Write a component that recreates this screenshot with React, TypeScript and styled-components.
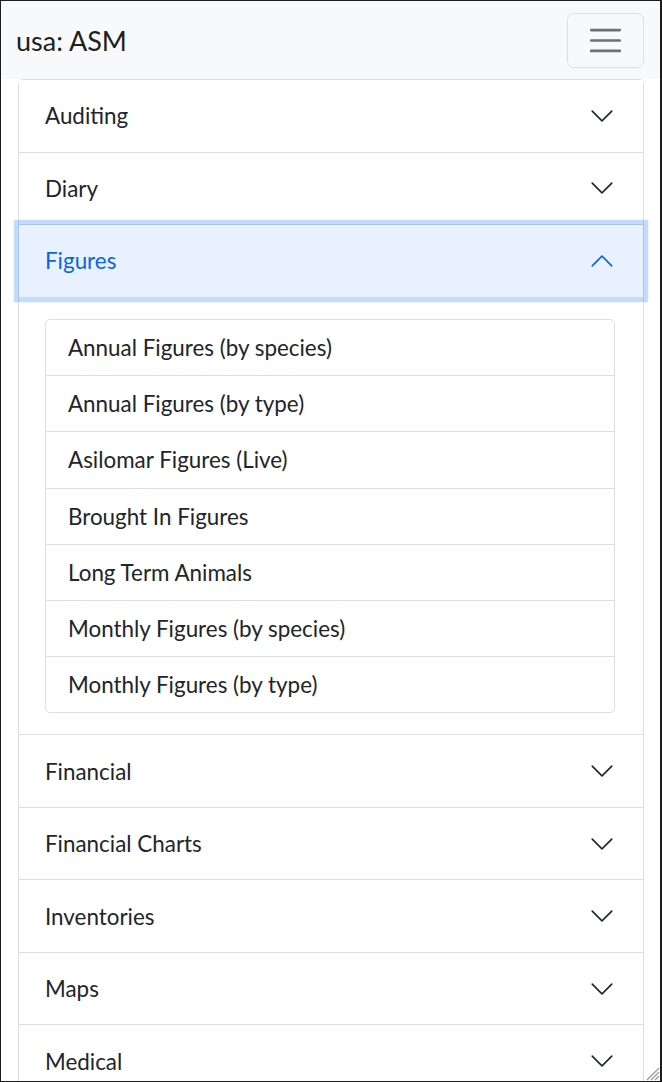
import React from "react"
import styled, { createGlobalStyle, css } from "styled-components"

const GlobalStyle = createGlobalStyle`
  html, body {
    margin: 0;
    padding: 0;
    background: #ffffff;
  }
  body {
    font-family: "Lato", "Open Sans", sans-serif;
    color: #212529;
  }
  * { box-sizing: border-box; }
`

const sections = [
  "Auditing",
  "Diary",
  "Figures",
  "Financial",
  "Financial Charts",
  "Inventories",
  "Maps",
  "Medical",
]

const figureReports = [
  "Annual Figures (by species)",
  "Annual Figures (by type)",
  "Asilomar Figures (Live)",
  "Brought In Figures",
  "Long Term Animals",
  "Monthly Figures (by species)",
  "Monthly Figures (by type)",
]

const Chevron = ({ open }: { open?: boolean }) => (
  <ChevronSvg viewBox="0 0 16 16" $open={open}>
    <path
      fillRule="evenodd"
      d="M1.646 4.646a.5.5 0 0 1 .708 0L8 10.293l5.646-5.647a.5.5 0 0 1 .708.708l-6 6a.5.5 0 0 1-.708 0l-6-6a.5.5 0 0 1 0-.708z"
    />
  </ChevronSvg>
)

const TogglerIcon = () => (
  <svg width="39" height="39" viewBox="0 0 30 30">
    <path
      stroke="rgba(0,0,0,0.55)"
      strokeLinecap="round"
      strokeMiterlimit="10"
      strokeWidth="2"
      d="M4 7h22M4 15h22M4 23h22"
    />
  </svg>
)

const ResizeGrip = () => (
  <Grip viewBox="0 0 16 16">
    <path d="M15 3L3 15M15 7L7 15M15 11L11 15" stroke="#9a9a9a" strokeWidth="1.3" />
  </Grip>
)

const App = () => {
  return (
    <>
      <GlobalStyle />
      <Frame>
        <Navbar>
          <Brand>usa: ASM</Brand>
          <Toggler aria-label="Toggle navigation">
            <TogglerIcon />
          </Toggler>
        </Navbar>
        <Container>
          <Accordion>
            {sections.map((name) => {
              const open = name === "Figures"
              return (
                <Item key={name}>
                  <Header $open={open}>
                    <span>{name}</span>
                    <Chevron open={open} />
                  </Header>
                  {open && (
                    <Body>
                      <ListGroup>
                        {figureReports.map((r) => (
                          <ListItem key={r}>{r}</ListItem>
                        ))}
                      </ListGroup>
                    </Body>
                  )}
                </Item>
              )
            })}
          </Accordion>
        </Container>
        <ResizeGrip />
      </Frame>
    </>
  )
}

const Frame = styled.div`
  position: relative;
  width: 662px;
  height: 1082px;
  border: 1px solid #1c1c1c;
  border-right-width: 2px;
  overflow: hidden;
  background: #fff;
`

const Navbar = styled.nav`
  display: flex;
  align-items: center;
  justify-content: space-between;
  height: 78px;
  padding: 0 16px 0 15px;
  background: #f8f9fa;
`

const Brand = styled.a`
  font-size: 27px;
  line-height: 39px;
  color: rgba(0, 0, 0, 0.9);
  text-decoration: none;
`

const Toggler = styled.button`
  display: flex;
  align-items: center;
  justify-content: center;
  width: 77px;
  height: 55px;
  padding: 0;
  background: transparent;
  border: 1.3px solid rgba(0, 0, 0, 0.1);
  border-radius: 6.5px;
`

const Container = styled.div`
  padding: 0 16px 0 17px;
`

const Accordion = styled.div`
  border: 1px solid rgba(0, 0, 0, 0.125);
  border-bottom: 0;
  border-radius: 5px 5px 0 0;
`

const Item = styled.div`
  position: relative;
  & + & {
    border-top: 1px solid rgba(0, 0, 0, 0.125);
  }
`

const Header = styled.button<{ $open?: boolean }>`
  position: relative;
  display: flex;
  align-items: center;
  justify-content: space-between;
  width: 100%;
  height: 71.5px;
  padding: 0 28px 0 26px;
  border: 0;
  background: #fff;
  font-family: inherit;
  font-size: 22.4px;
  color: #212529;
  text-align: left;
  ${(p) =>
    p.$open &&
    css`
      z-index: 3;
      color: #0c63e4;
      background: #e7f1ff;
      box-shadow: 0 0 0 5.2px rgba(13, 110, 253, 0.25);
    `}
`

const ChevronSvg = styled.svg<{ $open?: boolean }>`
  width: 26px;
  height: 26px;
  flex-shrink: 0;
  fill: ${(p) => (p.$open ? "#0c63e4" : "#212529")};
  transform: ${(p) => (p.$open ? "rotate(-180deg)" : "none")};
`

const Body = styled.div`
  padding: 22.5px 28px 21px 26px;
`

const ListGroup = styled.div`
  border: 1px solid rgba(0, 0, 0, 0.125);
  border-radius: 5px;
`

const ListItem = styled.div`
  display: flex;
  align-items: center;
  height: 56.2px;
  padding: 0 22px;
  font-size: 22.4px;
  color: #212529;
  &:first-child {
    height: 55.2px;
  }
  & + & {
    border-top: 1px solid rgba(0, 0, 0, 0.125);
  }
`

const Grip = styled.svg`
  position: absolute;
  right: 0;
  bottom: 0;
  width: 16px;
  height: 16px;
`

export default App
